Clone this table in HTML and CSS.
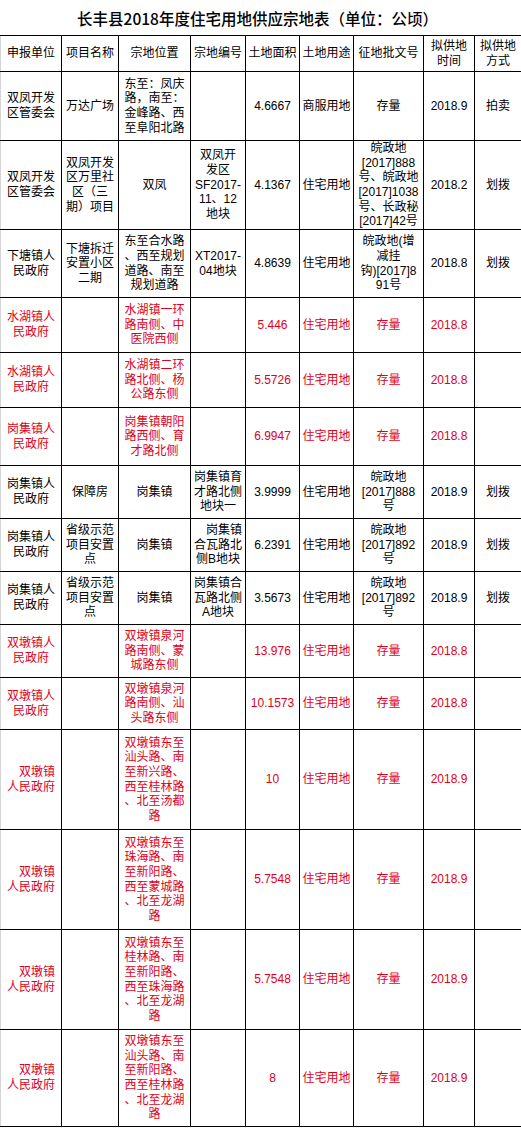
FILE: index.html
```html
<!DOCTYPE html>
<html lang="zh-CN">
<head>
<meta charset="utf-8">
<title>长丰县2018年度住宅用地供应宗地表</title>
<link rel="stylesheet" href="styles.css">
</head>
<body>
<div class="sheet">
  <div class="title">长丰县2018年度住宅用地供应宗地表（单位：公顷）</div>
  <table class="grid">
    <colgroup>
      <col class="c1"><col class="c2"><col class="c3"><col class="c4"><col class="c5"><col class="c6"><col class="c7"><col class="c8"><col class="c9">
    </colgroup>
    <thead>
      <tr class="h36">
        <th>申报单位</th><th>项目名称</th><th>宗地位置</th><th>宗地编号</th><th>土地面积</th><th>土地用途</th><th>征地批文号</th><th>拟供地<br>时间</th><th>拟供地<br>方式</th>
      </tr>
    </thead>
    <tbody>
      <tr class="h69">
        <td>双凤开发<br>区管委会</td><td>万达广场</td><td>东至：凤庆<br>路，南至：<br>金峰路、西<br>至阜阳北路</td><td></td><td>4.6667</td><td>商服用地</td><td>存量</td><td>2018.9</td><td>拍卖</td>
      </tr>
      <tr class="h89">
        <td>双凤开发<br>区管委会</td><td>双凤开发<br>区万里社<br>区（三<br>期）项目</td><td>双凤</td><td>双凤开<br>发区<br>SF2017-<br>11、12<br>地块</td><td>4.1367</td><td>住宅用地</td><td>皖政地<br>[2017]888<br>号、皖政地<br>[2017]1038<br>号、长政秘<br>[2017]42号</td><td>2018.2</td><td>划拨</td>
      </tr>
      <tr class="h68">
        <td>下塘镇人<br>民政府</td><td>下塘拆迁<br>安置小区<br>二期</td><td>东至合水路<br>、西至规划<br>道路、南至<br>规划道路</td><td>XT2017-<br>04地块</td><td>4.8639</td><td>住宅用地</td><td>皖政地(增<br>减挂<br>钩)[2017]8<br>91号</td><td>2018.8</td><td>划拨</td>
      </tr>
      <tr class="h55 red">
        <td>水湖镇人<br>民政府</td><td></td><td>水湖镇一环<br>路南侧、中<br>医院西侧</td><td></td><td>5.446</td><td>住宅用地</td><td>存量</td><td>2018.8</td><td></td>
      </tr>
      <tr class="h55 red">
        <td>水湖镇人<br>民政府</td><td></td><td>水湖镇二环<br>路北侧、杨<br>公路东侧</td><td></td><td>5.5726</td><td>住宅用地</td><td>存量</td><td>2018.8</td><td></td>
      </tr>
      <tr class="h58 red">
        <td>岗集镇人<br>民政府</td><td></td><td>岗集镇朝阳<br>路西侧、育<br>才路北侧</td><td></td><td>6.9947</td><td>住宅用地</td><td>存量</td><td>2018.8</td><td></td>
      </tr>
      <tr class="h53">
        <td>岗集镇人<br>民政府</td><td>保障房</td><td>岗集镇</td><td>岗集镇育<br>才路北侧<br>地块一</td><td>3.9999</td><td>住宅用地</td><td>皖政地<br>[2017]888<br>号</td><td>2018.9</td><td>划拨</td>
      </tr>
      <tr class="h53">
        <td>岗集镇人<br>民政府</td><td>省级示范<br>项目安置<br>点</td><td>岗集镇</td><td><span class="indent">岗集镇</span><br>合瓦路北<br>侧B地块</td><td>6.2391</td><td>住宅用地</td><td>皖政地<br>[2017]892<br>号</td><td>2018.9</td><td>划拨</td>
      </tr>
      <tr class="h53">
        <td>岗集镇人<br>民政府</td><td>省级示范<br>项目安置<br>点</td><td>岗集镇</td><td>岗集镇合<br>瓦路北侧<br>A地块</td><td>3.5673</td><td>住宅用地</td><td>皖政地<br>[2017]892<br>号</td><td>2018.9</td><td>划拨</td>
      </tr>
      <tr class="h53 red">
        <td>双墩镇人<br>民政府</td><td></td><td>双墩镇泉河<br>路南侧、蒙<br>城路东侧</td><td></td><td>13.976</td><td>住宅用地</td><td>存量</td><td>2018.8</td><td></td>
      </tr>
      <tr class="h52 red">
        <td>双墩镇人<br>民政府</td><td></td><td>双墩镇泉河<br>路南侧、汕<br>头路东侧</td><td></td><td>10.1573</td><td>住宅用地</td><td>存量</td><td>2018.8</td><td></td>
      </tr>
      <tr class="h100 red">
        <td class="right">双墩镇<br>人民政府</td><td></td><td>双墩镇东至<br>汕头路、南<br>至新兴路、<br>西至桂林路<br>、北至汤都<br>路</td><td></td><td>10</td><td>住宅用地</td><td>存量</td><td>2018.9</td><td></td>
      </tr>
      <tr class="h100 red">
        <td class="right">双墩镇<br>人民政府</td><td></td><td>双墩镇东至<br>珠海路、南<br>至新阳路、<br>西至蒙城路<br>、北至龙湖<br>路</td><td></td><td>5.7548</td><td>住宅用地</td><td>存量</td><td>2018.9</td><td></td>
      </tr>
      <tr class="h100 red">
        <td class="right">双墩镇<br>人民政府</td><td></td><td>双墩镇东至<br>桂林路、南<br>至新阳路、<br>西至珠海路<br>、北至龙湖<br>路</td><td></td><td>5.7548</td><td>住宅用地</td><td>存量</td><td>2018.9</td><td></td>
      </tr>
      <tr class="h97 red">
        <td class="right">双墩镇<br>人民政府</td><td></td><td>双墩镇东至<br>汕头路、南<br>至新阳路、<br>西至桂林路<br>、北至龙湖<br>路</td><td></td><td>8</td><td>住宅用地</td><td>存量</td><td>2018.9</td><td></td>
      </tr>
    </tbody>
  </table>
</div>
</body>
</html>
```

FILE: styles.css
```css
html, body {
  margin: 0;
  padding: 0;
  background: #ffffff;
}

.sheet {
  width: 521px;
  font-family: "Liberation Sans", "Noto Sans CJK SC", sans-serif;
  color: #000;
}

.title {
  height: 35px;
  display: flex;
  align-items: center;
  justify-content: center;
  font-family: "Noto Sans CJK SC", sans-serif;
  font-size: 15.5px;
  font-weight: 500;
  letter-spacing: 0;
  padding-right: 6px;
  box-sizing: border-box;
}

.grid {
  width: 521px;
  table-layout: fixed;
  border-collapse: collapse;
  font-size: 12px;
  line-height: 14.67px;
}

.c1 { width: 61px; }
.c2 { width: 57px; }
.c3 { width: 72px; }
.c4 { width: 55px; }
.c5 { width: 54px; }
.c6 { width: 54px; }
.c7 { width: 70px; }
.c8 { width: 51px; }
.c9 { width: 47px; }

.grid th,
.grid td {
  border: 1px solid #000;
  padding: 0 1px;
  text-align: center;
  vertical-align: middle;
  font-weight: normal;
  white-space: nowrap;
  overflow: hidden;
}

.grid th:first-child,
.grid td:first-child {
  border-left-color: #d4d4d4;
}

.grid .red td {
  color: #e0001b;
}

.grid td.right {
  text-align: right;
  padding-right: 6px;
}

.indent {
  padding-left: 12px;
}

.h36 th { height: 35px; }
.h69 td { height: 68px; }
.h89 td { height: 88px; }
.h68 td { height: 67px; }
.h58 td { height: 57px; }
.h55 td { height: 54px; }
.h53 td { height: 52px; }
.h52 td { height: 51px; }
.h100 td { height: 99px; }
.h97 td { height: 96px; }
```
